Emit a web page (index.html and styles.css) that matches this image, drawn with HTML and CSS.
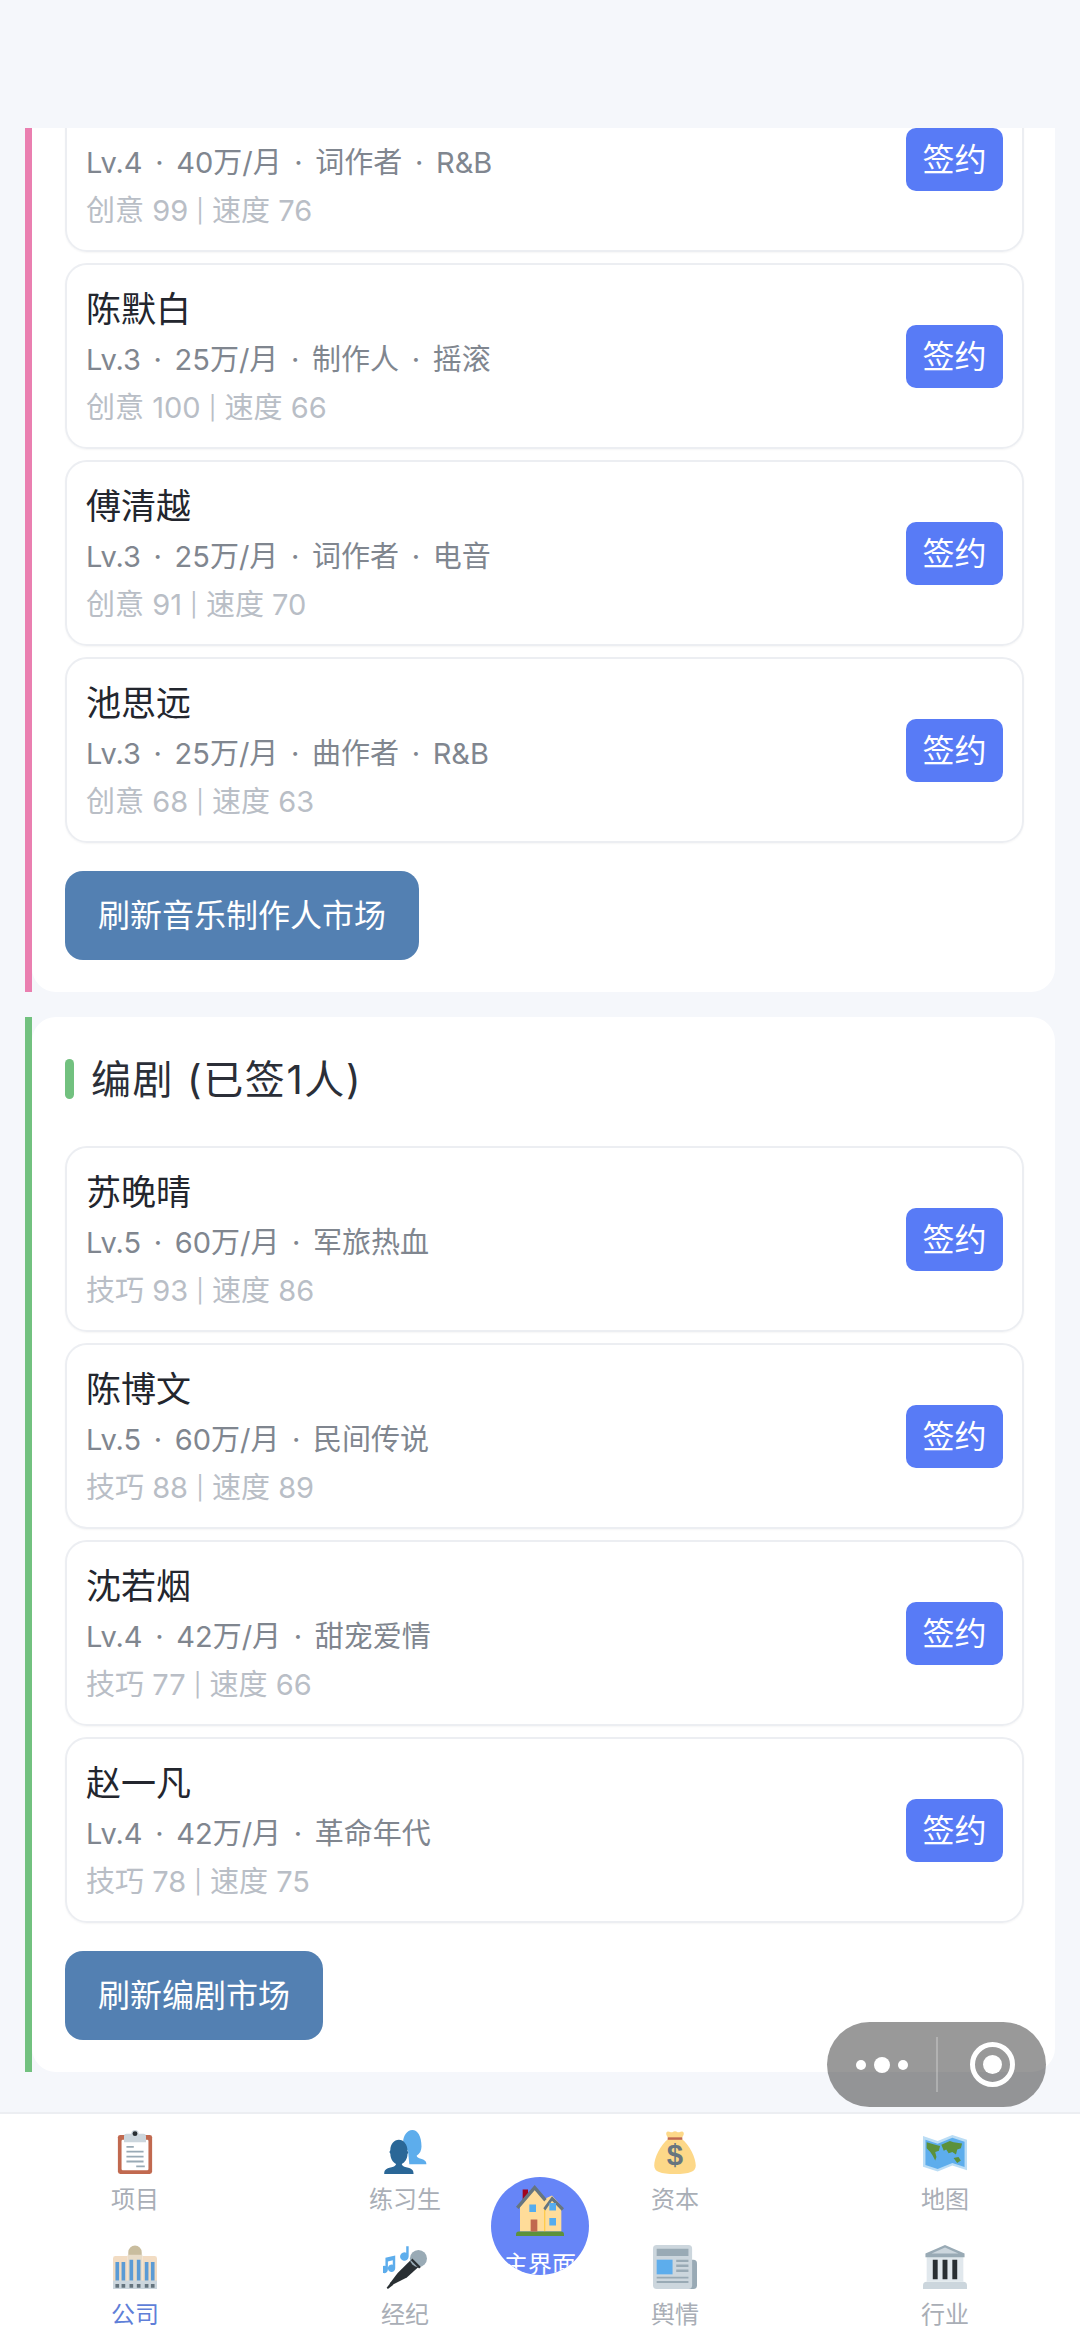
FILE: index.html
```html
<!DOCTYPE html>
<html lang="en">

<head>
    <meta charset="UTF-8">
    <meta name="viewport" content="width=device-width, initial-scale=1.0">
    <title>Company</title>
    <link rel="stylesheet" href="styles.css">
</head>

<body>
    <div class="topbar"></div>

    <main class="content">
        <section class="section section-pink section-cut">
            <div class="panel">
                <div class="card">
                    <div class="info">
                        <div class="name">林知秋</div>
                        <div class="meta">Lv.4 · 40万/月 · 词作者 · R&amp;B</div>
                        <div class="stats">创意 99 <span class="bar">|</span> 速度 76</div>
                    </div>
                    <button class="sign">签约</button>
                </div>
                <div class="card">
                    <div class="info">
                        <div class="name">陈默白</div>
                        <div class="meta">Lv.3 · 25万/月 · 制作人 · 摇滚</div>
                        <div class="stats">创意 100 <span class="bar">|</span> 速度 66</div>
                    </div>
                    <button class="sign">签约</button>
                </div>
                <div class="card">
                    <div class="info">
                        <div class="name">傅清越</div>
                        <div class="meta">Lv.3 · 25万/月 · 词作者 · 电音</div>
                        <div class="stats">创意 91 <span class="bar">|</span> 速度 70</div>
                    </div>
                    <button class="sign">签约</button>
                </div>
                <div class="card">
                    <div class="info">
                        <div class="name">池思远</div>
                        <div class="meta">Lv.3 · 25万/月 · 曲作者 · R&amp;B</div>
                        <div class="stats">创意 68 <span class="bar">|</span> 速度 63</div>
                    </div>
                    <button class="sign">签约</button>
                </div>
                <button class="refresh">刷新音乐制作人市场</button>
            </div>
        </section>

        <section class="section section-green">
            <div class="panel">
                <h3 class="title"><span class="mark"></span>编剧 (已签1人)</h3>
                <div class="card">
                    <div class="info">
                        <div class="name">苏晚晴</div>
                        <div class="meta">Lv.5 · 60万/月 · 军旅热血</div>
                        <div class="stats">技巧 93 <span class="bar">|</span> 速度 86</div>
                    </div>
                    <button class="sign">签约</button>
                </div>
                <div class="card">
                    <div class="info">
                        <div class="name">陈博文</div>
                        <div class="meta">Lv.5 · 60万/月 · 民间传说</div>
                        <div class="stats">技巧 88 <span class="bar">|</span> 速度 89</div>
                    </div>
                    <button class="sign">签约</button>
                </div>
                <div class="card">
                    <div class="info">
                        <div class="name">沈若烟</div>
                        <div class="meta">Lv.4 · 42万/月 · 甜宠爱情</div>
                        <div class="stats">技巧 77 <span class="bar">|</span> 速度 66</div>
                    </div>
                    <button class="sign">签约</button>
                </div>
                <div class="card">
                    <div class="info">
                        <div class="name">赵一凡</div>
                        <div class="meta">Lv.4 · 42万/月 · 革命年代</div>
                        <div class="stats">技巧 78 <span class="bar">|</span> 速度 75</div>
                    </div>
                    <button class="sign">签约</button>
                </div>
                <button class="refresh">刷新编剧市场</button>
            </div>
        </section>
    </main>

    <nav class="tabbar">
        <div class="tab">
            <svg class="icon" viewBox="0 0 36 36">
                <path fill="#C1694F" d="M32 34a2 2 0 0 1-2 2H6a2 2 0 0 1-2-2V6a2 2 0 0 1 2-2h24a2 2 0 0 1 2 2z"/>
                <path fill="#fff" d="M29 32a1 1 0 0 1-1 1H8a1 1 0 0 1-1-1V9a1 1 0 0 1 1-1h20a1 1 0 0 1 1 1z"/>
                <path fill="#CCD6DD" d="M25 3h-4a3 3 0 1 0-6 0h-4a2 2 0 0 0-2 2v5h18V5a2 2 0 0 0-2-2z"/>
                <circle fill="#292F33" cx="18" cy="3" r="2"/>
                <path fill="#99AAB5" d="M11 13h6v1.500h-6zM11 17h14v1.500H11zM11 21h14v1.500H11zM11 25h14v1.500H11zM19 29h7v1.500h-7z"/>
            </svg>
            <span class="label">项目</span>
        </div>
        <div class="tab">
            <svg class="icon" viewBox="0 0 36 36">
                <path fill="#5DADEC" d="M35.500 28c0-2-.8-3.500-4.500-4.500-2-.5-3.300-1.300-3.500-2.500 2.600-1.500 4-4.200 4-7.500C31.500 5 28.300 0 24 0s-7.500 5-7.500 9.500c0 3.300 1.400 6 4 7.500l1 11z"/>
                <path fill="#2A6797" d="M25 36c0-3-1-4.500-6-5.500-2.200-.5-3.500-1.400-3.700-2.700 2.700-1.400 4.700-4.500 4.700-7.800 0-.4.6-.8.600-1.500 0-.8-.6-1.200-.6-1.700C20 12 16.900 8 13 8s-7 4-7 8.300c0 .5-.7.900-.7 1.700 0 .7.700 1.100.7 1.500 0 3.800 2 6.900 4.700 8.300-.2 1.300-1.500 2.200-3.700 2.700-5 1-6 2.500-6 5.500z"/>
            </svg>
            <span class="label">练习生</span>
        </div>
        <div class="tab">
            <svg class="icon" viewBox="0 0 36 36">
                <path fill="#FDD888" d="M23 7s3-3 2-5c-.6-1.300-2.500-.5-3.500-.2C20 2.300 19.500 1 18 1s-2 1.300-3.500.8C13.500 1.500 11.600.7 11 2c-1 2 2 5 2 5C6 12 1 23 1 29c0 5 5 7 17 7s17-2 17-7c0-6-5-17-12-22z"/>
                <path fill="#BF6952" d="M12 6h12v2H12z"/>
                <text class="dollar" x="18" y="29" text-anchor="middle">$</text>
            </svg>
            <span class="label">资本</span>
        </div>
        <div class="tab">
            <svg class="icon" viewBox="0 0 36 36">
                <path fill="#BBDDF5" d="M0 5l12 4 12-5 12 4v25l-12-4-12 5-12-4z"/>
                <path fill="#5DADEC" d="M2 8l10 3.300 12-5 10 3.300v20.700l-10-3.300-12 5-10-3.300z"/>
                <path fill="#5C913B" d="M3 10l7 2 4 1-1 4-3 1 1 4-1 3-2-4-2-3-3-3zM15 12l7-3 3 1 7 1-1 4-3 1-1 4-3-2-3 1-2-3-2 1zM25 23l4-1 2 3-3 2z"/>
            </svg>
            <span class="label">地图</span>
        </div>
        <div class="tab">
            <svg class="icon" viewBox="0 0 36 36">
                <path fill="#C9BD9E" d="M12.500 6a5.500 5.500 0 0 1 11 0v4h-11z"/>
                <path fill="#E8DCC8" d="M12 8h12v26H12z"/>
                <path fill="#F2DCC3" d="M0 11a2 2 0 0 1 2-2h10v27H0zM24 9h10a2 2 0 0 1 2 2v25H24z"/>
                <path fill="#CCD6DD" d="M0 29h36v7H0z"/>
                <path fill="#5B9BD5" d="M2 14h3v15H2zM7 14h3v15H7zM26 14h3v15h-3zM31 14h3v15h-3zM13.500 12h3v17h-3zM19.500 12h3v17h-3z"/>
                <path fill="#66757F" d="M2 32h3v3H2zM7 32h3v3H7zM13.500 32h3v3h-3zM19.500 32h3v3h-3zM26 32h3v3h-3zM31 32h3v3h-3z"/>
            </svg>
            <span class="label label-on">公司</span>
        </div>
        <div class="tab">
            <svg class="icon" viewBox="0 0 36 36">
                <path fill="#5DADEC" d="M10 8.500L2 10.500v6.700a3 3 0 1 0 2 2.800v-6.500l4-1v3.700a3 3 0 1 0 2 2.800zM19 1h2v8.500a3.500 3.500 0 1 1-2-3.200z"/>
                <path fill="#292F33" d="M24 11l5 7-9.500 8.500L7 33l-1.500-1.500L12 23z"/>
                <path fill="#292F33" d="M6.500 30.500L3 35l1 1 4.500-3.500z"/>
                <circle fill="#99AAB5" cx="29" cy="11" r="7"/>
                <path fill="#292F33" d="M22.800 12.500l1.200-1.500 7 7-1.500 1.200z"/>
            </svg>
            <span class="label">经纪</span>
        </div>
        <div class="tab">
            <svg class="icon" viewBox="0 0 36 36">
                <path fill="#99AAB5" d="M28 12h5a3 3 0 0 1 3 3v18a3 3 0 0 1-3 3h-5z"/>
                <rect fill="#CCD6DD" x="0" y="0" width="32" height="36" rx="3"/>
                <path fill="#99AAB5" d="M3 3h26v6H3z"/>
                <path fill="#5DADEC" d="M3 12h13v12H3z"/>
                <path fill="#99AAB5" d="M19 12h10v2h-10zM19 16h10v2h-10zM19 20h10v2h-10zM3 26h26v1.500H3zM3 29.500h26V31H3z"/>
            </svg>
            <span class="label">舆情</span>
        </div>
        <div class="tab">
            <svg class="icon" viewBox="0 0 36 36">
                <path fill="#CCD6DD" d="M0 36v-3a3 3 0 0 1 3-3h30a3 3 0 0 1 3 3v3z"/>
                <path fill="#E1E8ED" d="M3 9h30v21H3z"/>
                <path fill="#99AAB5" d="M18 0L2 7v3h32V7z"/>
                <path fill="#CCD6DD" d="M18 2L7 7h22z"/>
                <path fill="#292F33" d="M8 12h4v16H8zM16 12h4v16h-4zM24 12h4v16h-4z"/>
            </svg>
            <span class="label">行业</span>
        </div>

        <div class="home">
            <svg class="home-icon" viewBox="0 0 36 36" preserveAspectRatio="none">
                <path fill="#A0041E" d="M5 5h4v9H5z"/>
                <path fill="#FFDC99" d="M3 14L14 3l8 8 5-2 7 7v17H3z"/>
                <path fill="#FFCC4D" d="M21 17h1v16h-1z"/>
                <path fill="#5C913B" d="M0 35a2 2 0 0 1 2-2h32a2 2 0 0 1 2 2v1H0z"/>
                <path fill="#66757F" d="M0 16.500L14 2l9 9.300-1.800 1.700L14 5.500 2 18zM20.500 17.500L27 9.500l9 8-1.700 1.700L27 12.500l-5 6.500z"/>
                <path fill="#55ACEE" d="M10 15h5v5h-5zM25 14h5v5h-5zM25 24h5v5h-5z"/>
                <path fill="#C1694F" d="M11 25h5v8h-5z"/>
            </svg>
            <span class="home-label">主界面</span>
        </div>
    </nav>

    <div class="capsule">
        <div class="dots">
            <span class="dot"></span>
            <span class="dot dot-big"></span>
            <span class="dot"></span>
        </div>
        <span class="split"></span>
        <span class="ring"></span>
    </div>
</body>

</html>
```

FILE: styles.css
```css
* {
    box-sizing: border-box;
}

html,
body {
    margin: 0;
    height: 2339px;
}

body {
    position: relative;
    display: flex;
    flex-direction: column;
    overflow: hidden;
    background-color: #f5f7fb;
    font-family: Inter, "Noto Sans CJK SC", sans-serif;
}

.topbar {
    height: 128px;
    flex-shrink: 0;
}

.content {
    flex: 1;
    min-height: 0;
    overflow: hidden;
    padding: 0 25px;
}

.section {
    border-left: 7px solid;
    margin-bottom: 25px;
}

.section-pink {
    border-color: #ea7fb0;
}

.section-green {
    border-color: #72c17f;
}

.section-cut {
    margin-top: -62px;
}

.panel {
    padding: 42px 31px 32px 33px;
    background-color: #fff;
    border-radius: 24px;
}

.section-cut .panel {
    padding-top: 0;
    border-top-left-radius: 0;
    border-top-right-radius: 0;
}

.title {
    display: flex;
    align-items: center;
    height: 40px;
    margin: 0 0 47px;
    padding-bottom: 5px;
    font-size: 40px;
    font-weight: 400;
    letter-spacing: 1.6px;
    color: #2b2f38;
}

.mark {
    align-self: flex-start;
    flex-shrink: 0;
    width: 9px;
    height: 40px;
    margin-right: 17px;
    background-color: #72c17f;
    border-radius: 5px;
}

.card {
    display: flex;
    align-items: center;
    justify-content: space-between;
    height: 186px;
    margin-bottom: 11px;
    padding: 0 19px 0 19px;
    border: 2px solid #eceef2;
    border-radius: 22px;
    box-shadow: 0 1px 2px rgba(0, 0, 0, 0.04);
}

.info {
    padding-top: 5px;
}

.name {
    margin-bottom: 4px;
    font-size: 35px;
    line-height: 46px;
    color: #23262e;
}

.meta,
.stats {
    font-size: 29px;
    line-height: 48px;
}

.meta {
    color: #80868f;
    word-spacing: 4.5px;
}

.stats {
    color: #b9bec6;
}

.bar {
    font-size: 23px;
    vertical-align: 2px;
}

button {
    border: none;
    color: #fff;
    font-family: inherit;
    font-size: 32px;
}

.sign {
    width: 97px;
    height: 63px;
    padding: 0 0 5px;
    background-color: #587bf6;
    border-radius: 10px;
}

.refresh {
    display: block;
    height: 89px;
    margin-top: 28px;
    padding: 0 33px 5px;
    background-color: #5380b2;
    border-radius: 18px;
}

.tabbar {
    position: relative;
    flex-shrink: 0;
    display: grid;
    grid-template-columns: repeat(4, 1fr);
    row-gap: 29px;
    padding: 16px 0 8px;
    background-color: #fff;
    border-top: 2px solid #eceef2;
}

.tab {
    display: flex;
    flex-direction: column;
    align-items: center;
}

.icon {
    width: 44px;
    height: 44px;
    margin-bottom: 10px;
}

.dollar {
    font-family: "Liberation Sans", sans-serif;
    font-size: 24px;
    font-weight: 700;
    fill: #67757f;
}

.label {
    font-size: 24px;
    line-height: 32px;
    color: #a9aeb6;
}

.label-on {
    color: #5f7fd8;
}

.home {
    position: absolute;
    top: 63px;
    left: 50%;
    display: flex;
    flex-direction: column;
    align-items: center;
    width: 98px;
    height: 98px;
    margin-left: -49px;
    padding-top: 5px;
    overflow: hidden;
    background-color: #6685f7;
    border-radius: 50%;
}

.home-icon {
    width: 48px;
    height: 54px;
    flex-shrink: 0;
}

.home-label {
    margin-top: 13px;
    font-size: 24px;
    line-height: 32px;
    color: #fff;
}

.capsule {
    position: absolute;
    right: 34px;
    bottom: 232px;
    display: flex;
    align-items: center;
    width: 219px;
    height: 85px;
    background-color: rgba(0, 0, 0, 0.4);
    border-radius: 43px;
}

.dots {
    display: flex;
    align-items: center;
    justify-content: center;
    gap: 8px;
    width: 109px;
}

.dot {
    width: 10px;
    height: 10px;
    background-color: #fff;
    border-radius: 50%;
}

.dot-big {
    width: 16px;
    height: 16px;
}

.split {
    width: 2px;
    height: 55px;
    background-color: rgba(255, 255, 255, 0.25);
}

.ring {
    position: relative;
    width: 45px;
    height: 45px;
    margin-left: 32px;
    border: 5px solid #fff;
    border-radius: 50%;
}

.ring::after {
    content: "";
    position: absolute;
    top: 8px;
    left: 8px;
    width: 19px;
    height: 19px;
    background-color: #fff;
    border-radius: 50%;
}
```
